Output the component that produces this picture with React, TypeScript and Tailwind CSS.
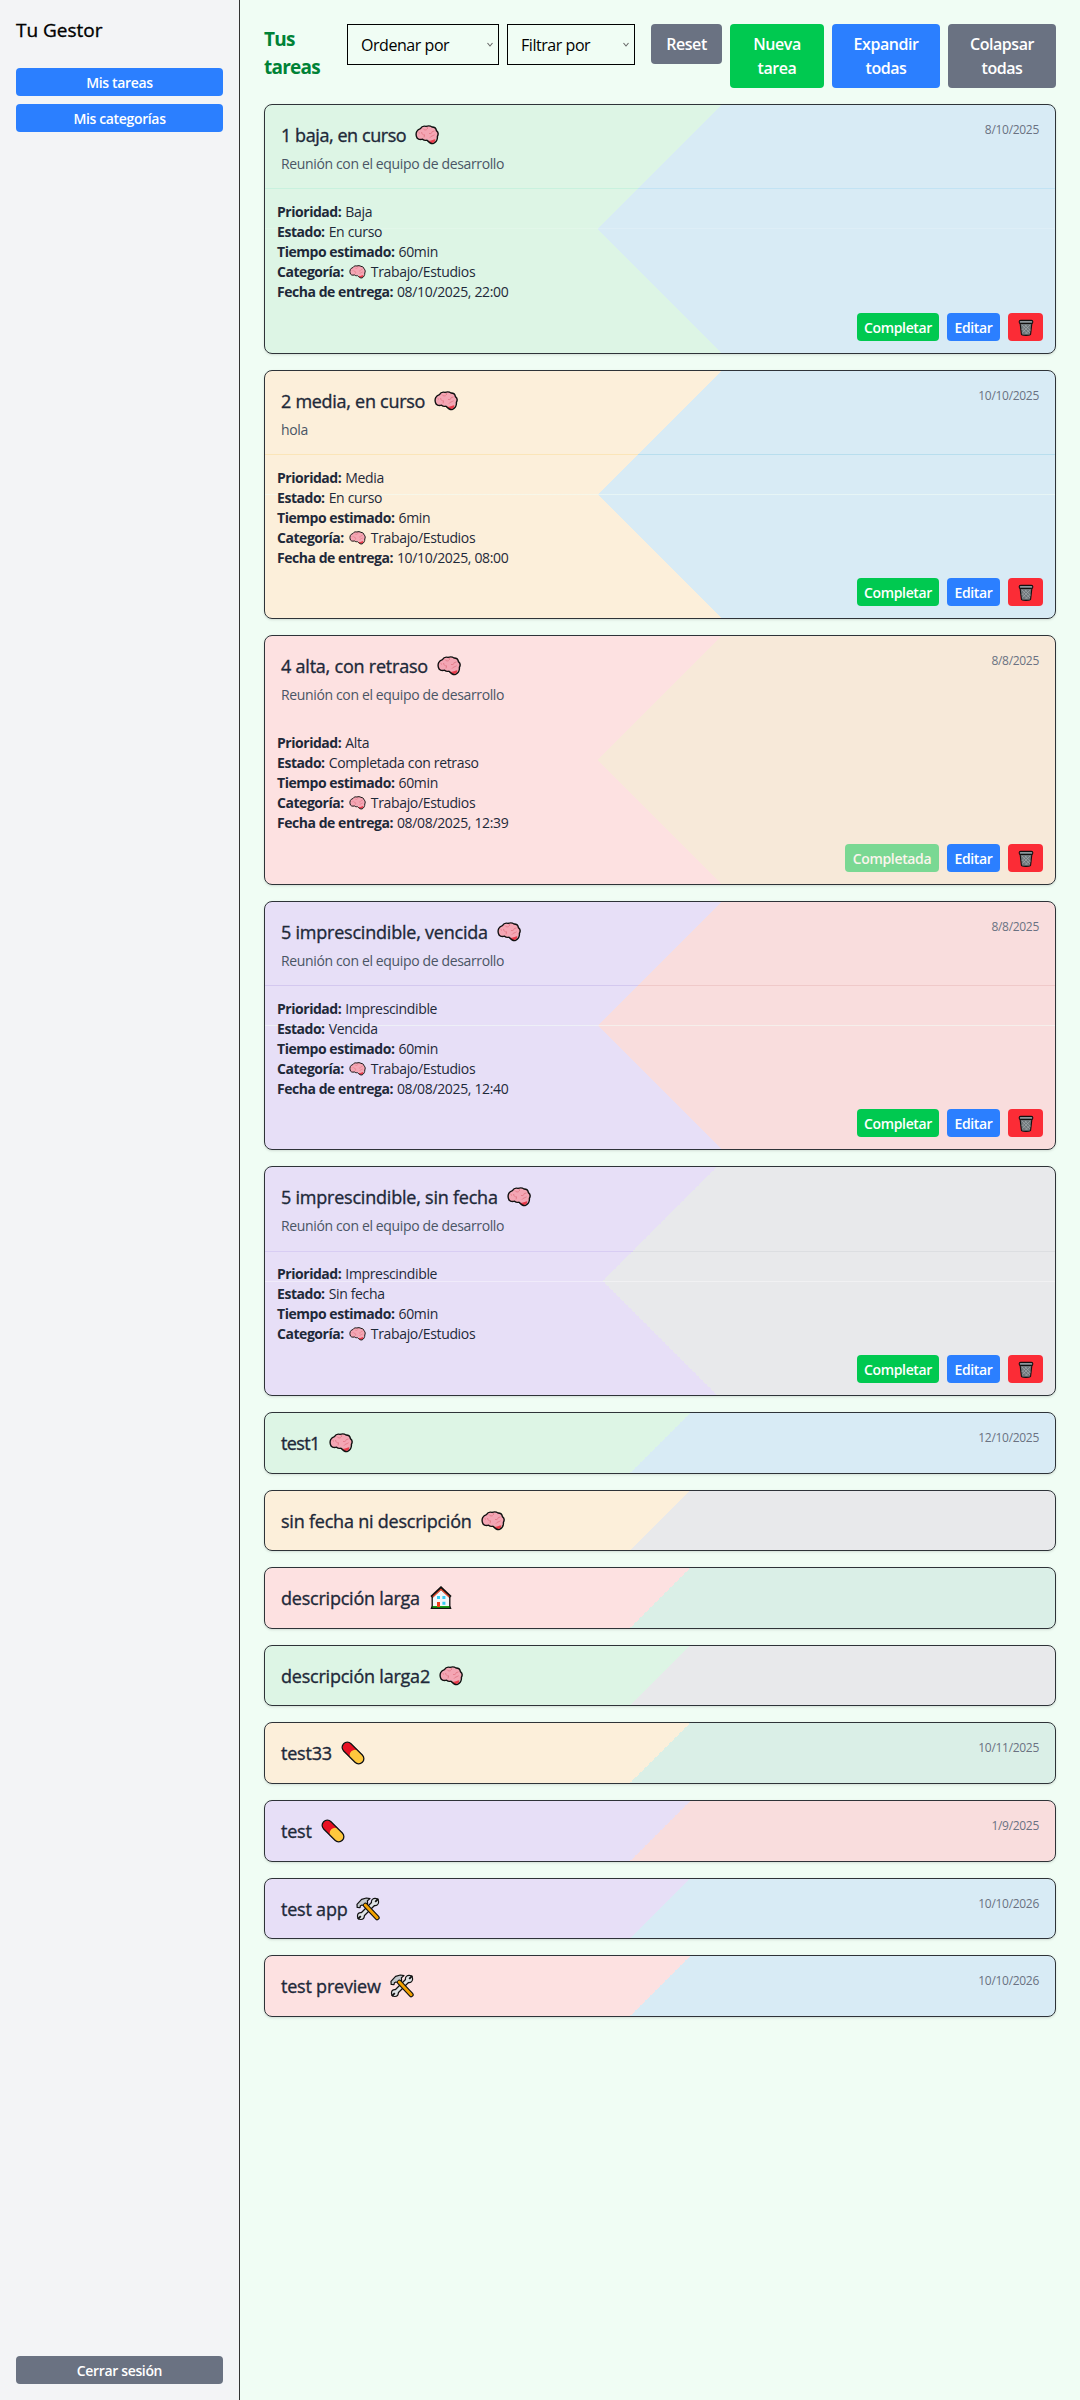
import React from "react";

type IconName = "brain" | "house" | "pill" | "tools";

function Brain({ className }: { className: string }) {
  return (
    <svg viewBox="0 0 24 20" className={className}>
      <path d="M14.5 15.5 20.6 13.6 C20.8 16.8 18.6 18.6 16.4 18.2 C14.4 17.8 13.6 16.6 12 15.4Z" fill="#e83b4b" />
      <path
        d="M5.4 3.6 C6.6 1.6 9 .8 11 1.4 C13 .7 15.4 .8 17 2 C19.4 2 21.2 3.6 21.4 5.6 C23.2 7 23.6 9.4 22.6 11 C22.6 13.4 20.6 14.8 18.4 14.6 C16.6 16 14 15.8 12.4 14.4 C10.4 15.4 8.6 15.2 7.6 14.2 C4.6 15.2 1.8 14 1.4 11.4 C.4 8 2 4.4 5.4 3.6Z"
        fill="#f4a6b4"
      />
      <path
        d="M8 3.6 C9 5 10.4 5.2 11.8 4.6 M12 1.8 12.6 4 M6.6 7 C6.6 9 8 10.2 9.8 9.8 M9 12.4 9.6 10 M14 8.4 C15.4 9 17 8.4 17.2 6.6 M17.2 6.6 19.4 6 M15 12.6 C15.8 11 17.8 11 19.6 9.8 M3.6 7.4 5 8.4"
        fill="none"
        stroke="#e5808d"
        strokeWidth="1"
      />
      <path
        d="M5.4 3.6 C6.6 1.6 9 .8 11 1.4 C13 .7 15.4 .8 17 2 C19.4 2 21.2 3.6 21.4 5.6 C23.2 7 23.4 9.6 22.4 11.4 C22.6 14 21.4 17 18.6 18.4 C16.2 19.2 13.6 17 12 15.2 C10.4 15.6 8.6 15.2 7.6 14.2 C4.6 15.2 1.8 14 1.4 11.4 C.4 8 2 4.4 5.4 3.6Z"
        fill="none"
        stroke="#111"
        strokeWidth="1.4"
        strokeLinejoin="round"
      />
    </svg>
  );
}

function Icon({ name }: { name: IconName }) {
  if (name === "brain") return <Brain className="h-5 w-6" />;
  if (name === "house")
    return (
      <svg viewBox="0 0 24 24" className="size-6">
        <path d="M3.4 10 12 2.4 20.6 10 V21 H3.4Z" fill="#f4f6f8" />
        <path d="M3 20 H21 V22 H3Z" fill="#16a016" />
        <path d="M2.4 11 12 2 21.6 11" fill="none" stroke="#111" strokeWidth="3" />
        <path d="M3.4 11.2 12 3.2 20.6 11.2" fill="none" stroke="#e8482c" strokeWidth="1.2" />
        <path d="M3.2 10.5 V20 L2.4 22.4 H21.6 L20.8 20 V10.5" fill="none" stroke="#111" strokeWidth="1.3" />
        <path d="M8 16 H11 V21 H8Z" fill="#f03a17" />
        <path d="M8 10 H11 V13 H8Z M13.4 10 H16.4 V13 H13.4Z M13.4 15.8 H16.4 V18.8 H13.4Z" fill="#35cdf5" />
      </svg>
    );
  if (name === "pill")
    return (
      <svg viewBox="0 0 24 24" className="size-6">
        <g transform="rotate(45 12 12)">
          <path d="M12 7 H4.2 A5 5 0 0 0 4.2 17 H12Z" fill="#e81123" />
          <path d="M13 7 H19.8 A5 5 0 0 1 19.8 17 H13 A5.4 5.4 0 0 1 13 7Z" fill="#ffc83d" />
          <rect x="-1.2" y="6.8" width="26.4" height="10.4" rx="5.2" fill="none" stroke="#111" strokeWidth="1.3" />
        </g>
      </svg>
    );
  return (
    <svg viewBox="0 0 24 24" className="size-6">
      <path d="M5 19 L19 5" stroke="#111" strokeWidth="5.4" />
      <circle cx="4.9" cy="19.1" r="4" fill="#111" />
      <circle cx="19" cy="5" r="4.2" fill="#111" />
      <path d="M5 19 L19 5" stroke="#dfe3e6" strokeWidth="3" />
      <circle cx="4.9" cy="19.1" r="2.8" fill="#dfe3e6" />
      <circle cx="19" cy="5" r="3" fill="#dfe3e6" />
      <path d="M1.8 22.2 L4.8 19.2 M19.2 4.8 L22.4 1.6" stroke="#111" strokeWidth="1.8" />
      <path
        d="M1.2 10.4 L1 7.4 L5.6 2.4 L10.4 1 L14 1.6 L11.4 3.8 L11.6 6.6 L9 9 L6 8 L4.4 8.8 L4 10.6Z"
        fill="#c3c8cc"
        stroke="#111"
        strokeWidth="1.2"
        strokeLinejoin="round"
      />
      <path d="M9.4 8.2 L21.2 20.8" stroke="#111" strokeWidth="5" strokeLinecap="round" />
      <path d="M9.2 8 L21.2 20.8" stroke="#f2a100" strokeWidth="2.8" strokeLinecap="round" />
    </svg>
  );
}

function Trash() {
  return (
    <svg viewBox="0 0 16 18" className="mt-0.5 h-[18px] w-4">
      <path d="M2 3.4 L3.4 15.2 C3.6 16.8 12.4 16.8 12.6 15.2 L14 3.4Z" fill="#6f777b" stroke="#111" strokeWidth="1.1" />
      <path
        d="M4 6 12 14 M4.6 10 9.5 15 M7 6 12.6 11.4 M12 6 4.4 13.6 M12 10.4 7.4 15 M8.6 6 3.8 10.8"
        stroke="#a9b1b5"
        strokeWidth=".6"
      />
      <rect x="1.2" y="1.4" width="13.6" height="3" rx="1.4" fill="#8d979c" stroke="#111" strokeWidth="1.1" />
    </svg>
  );
}

type Task = {
  title: string;
  tracking?: string;
  icon: IconName;
  date?: string;
  bg: string;
  desc?: string;
  fields?: [string, string][];
  done?: boolean;
  size: string;
};

const tasks: Task[] = [
  {
    title: "1 baja, en curso",
    tracking: "tracking-[-0.43px]",
    icon: "brain",
    date: "8/10/2025",
    desc: "Reunión con el equipo de desarrollo",
    size: "h-[249.6px]",
    bg: "[background:linear-gradient(90deg,#c8f1de_0_373px,#c2e3f4_373px)_0_83px/100%_1px_no-repeat,linear-gradient(#ffffff28,#ffffff28)_0_123px/100%_1px_no-repeat,linear-gradient(135deg,#ddf5e5_50%,#d8ebf5_50%)_top/100%_50%_no-repeat,linear-gradient(45deg,#ddf5e5_50%,#d8ebf5_50%)_bottom/100%_50%_no-repeat]",
    fields: [["Prioridad", "Baja"], ["Estado", "En curso"], ["Tiempo estimado", "60min"], ["Categoría", "Trabajo/Estudios"], ["Fecha de entrega", "08/10/2025, 22:00"]],
  },
  {
    title: "2 media, en curso",
    tracking: "tracking-[-0.28px]",
    icon: "brain",
    date: "10/10/2025",
    desc: "hola",
    size: "h-[249.6px]",
    bg: "[background:linear-gradient(90deg,#fbe5b8_0_373px,#b8deee_373px)_0_83px/100%_1px_no-repeat,linear-gradient(#ffffff18,#ffffff18)_0_123px/100%_1px_no-repeat,linear-gradient(135deg,#fcefda_50%,#d8ebf5_50%)_top/100%_50%_no-repeat,linear-gradient(45deg,#fcefda_50%,#d8ebf5_50%)_bottom/100%_50%_no-repeat]",
    fields: [["Prioridad", "Media"], ["Estado", "En curso"], ["Tiempo estimado", "6min"], ["Categoría", "Trabajo/Estudios"], ["Fecha de entrega", "10/10/2025, 08:00"]],
  },
  {
    title: "4 alta, con retraso",
    icon: "brain",
    date: "8/8/2025",
    desc: "Reunión con el equipo de desarrollo",
    size: "h-[249.6px]",
    done: true,
    bg: "[background:linear-gradient(135deg,#fde1e1_50%,#f7e9d9_50%)_top/100%_50%_no-repeat,linear-gradient(45deg,#fde1e1_50%,#f7e9d9_50%)_bottom/100%_50%_no-repeat]",
    fields: [["Prioridad", "Alta"], ["Estado", "Completada con retraso"], ["Tiempo estimado", "60min"], ["Categoría", "Trabajo/Estudios"], ["Fecha de entrega", "08/08/2025, 12:39"]],
  },
  {
    title: "5 imprescindible, vencida",
    icon: "brain",
    date: "8/8/2025",
    desc: "Reunión con el equipo de desarrollo",
    size: "h-[249.6px]",
    bg: "[background:linear-gradient(90deg,#d4c8ef_0_373px,#f0c9c9_373px)_0_83px/100%_1px_no-repeat,linear-gradient(#ffffff20,#ffffff20)_0_123px/100%_1px_no-repeat,linear-gradient(135deg,#e7dff7_50%,#f9dddd_50%)_top/100%_50%_no-repeat,linear-gradient(45deg,#e7dff7_50%,#f9dddd_50%)_bottom/100%_50%_no-repeat]",
    fields: [["Prioridad", "Imprescindible"], ["Estado", "Vencida"], ["Tiempo estimado", "60min"], ["Categoría", "Trabajo/Estudios"], ["Fecha de entrega", "08/08/2025, 12:40"]],
  },
  {
    title: "5 imprescindible, sin fecha",
    icon: "brain",
    desc: "Reunión con el equipo de desarrollo",
    size: "h-[229.6px]",
    bg: "[background:linear-gradient(90deg,#d8cdf3_0_368px,#dcdee1_368px)_0_84px/100%_1px_no-repeat,linear-gradient(#ffffff60,#ffffff60)_0_114px/100%_1px_no-repeat,linear-gradient(135deg,#e7dff7_50%,#e8e9eb_50%)_top/100%_50%_no-repeat,linear-gradient(45deg,#e7dff7_50%,#e8e9eb_50%)_bottom/100%_50%_no-repeat]",
    fields: [["Prioridad", "Imprescindible"], ["Estado", "Sin fecha"], ["Tiempo estimado", "60min"], ["Categoría", "Trabajo/Estudios"]],
  },
  { title: "test1", tracking: "tracking-[-0.6px]", icon: "brain", date: "12/10/2025", size: "h-[61.6px]", bg: "bg-[linear-gradient(135deg,#ddf5e5_50%,#d8ebf5_50%)]" },
  { title: "sin fecha ni descripción", icon: "brain", size: "h-[61.6px]", bg: "bg-[linear-gradient(135deg,#fcefda_50%,#e8e9eb_50%)]" },
  { title: "descripción larga", icon: "house", size: "h-[61.6px]", bg: "bg-[linear-gradient(135deg,#fde1e1_50%,#daefe7_50%)]" },
  { title: "descripción larga2", icon: "brain", size: "h-[61.6px]", bg: "bg-[linear-gradient(135deg,#ddf5e5_50%,#e8e9eb_50%)]" },
  { title: "test33", icon: "pill", date: "10/11/2025", size: "h-[61.6px]", bg: "bg-[linear-gradient(135deg,#fcefda_50%,#daefe7_50%)]" },
  { title: "test", icon: "pill", date: "1/9/2025", size: "h-[61.6px]", bg: "bg-[linear-gradient(135deg,#e7dff7_50%,#f9dddd_50%)]" },
  { title: "test app", icon: "tools", date: "10/10/2026", size: "h-[61.6px]", bg: "bg-[linear-gradient(135deg,#e7dff7_50%,#d8ebf5_50%)]" },
  { title: "test preview", icon: "tools", date: "10/10/2026", size: "h-[61.6px]", bg: "bg-[linear-gradient(135deg,#fde1e1_50%,#d8ebf5_50%)]" },
];

function TaskCard({ task }: { task: Task }) {
  return (
    <article className={`flex shrink-0 flex-col overflow-hidden rounded-lg border border-[#2e3338] shadow-sm ${task.size} ${task.bg}`}>
      <header className="flex items-start justify-between p-4 pb-0">
        <div>
          <div className="flex h-7 items-center gap-[9px]">
            <h3
              className={`text-lg leading-7 font-medium whitespace-nowrap text-gray-800 [-webkit-text-stroke:0.35px] ${task.tracking ?? "tracking-[-0.22px]"}`}
            >
              {task.title}
            </h3>
            <Icon name={task.icon} />
          </div>
          {task.desc && <p className="mt-[5px] text-sm tracking-[-0.36px] text-gray-600">{task.desc}</p>}
        </div>
        {task.date && <time className="pt-px text-xs tracking-[-0.3px] text-gray-500">{task.date}</time>}
      </header>
      {task.fields && (
        <>
          <dl className="mt-7 px-3 text-sm tracking-[-0.34px] text-gray-800">
            {task.fields.map(([k, v]) => (
              <div key={k} className="flex h-5 items-center gap-1 whitespace-nowrap">
                <dt className="font-bold tracking-[-0.46px]">{k}:</dt>
                {k === "Categoría" && <Brain className="mx-px h-[14px] w-[17px]" />}
                <dd>{v}</dd>
              </div>
            ))}
          </dl>
          <footer className="mt-auto flex justify-end gap-2 px-3 pb-3 text-sm font-semibold tracking-[-0.35px] text-white">
            {task.done ? (
              <button className="h-7 w-[94px] rounded bg-[#00c950] pt-0.5 opacity-50">Completada</button>
            ) : (
              <button className="h-7 w-[82px] rounded bg-[#00c950] pt-0.5">Completar</button>
            )}
            <button className="h-7 w-[53px] rounded bg-[#2b7fff] pt-0.5">Editar</button>
            <button className="flex h-7 w-[35px] items-center justify-center rounded bg-[#fb2c36]">
              <Trash />
            </button>
          </footer>
        </>
      )}
    </article>
  );
}

function Select({ label, className }: { label: string; className: string }) {
  return (
    <div className={`flex h-[41px] items-center justify-between border border-black pr-1 pl-[13px] text-base tracking-[-0.45px] ${className}`}>
      <span>{label}</span>
      <svg viewBox="0 0 8 6" className="h-1.5 w-2">
        <path d="M1.5 1 4 4 6.5 1" fill="none" stroke="#666" strokeWidth="1.1" />
      </svg>
    </div>
  );
}

export default function App() {
  return (
    <div className="flex h-[2400px] w-[1080px] bg-[#f0fdf4] font-['Open_Sans','Noto_Sans',sans-serif]">
      <aside className="flex w-60 shrink-0 flex-col border-r border-[#333] bg-gray-100 p-4">
        <h1 className="mb-6 text-[19px] leading-7 font-medium text-black [-webkit-text-stroke:0.35px]">Tu Gestor</h1>
        <nav className="flex flex-col gap-2 text-sm font-semibold tracking-[-0.35px] text-white">
          <button className="h-7 rounded bg-[#2b7fff] pt-0.5">Mis tareas</button>
          <button className="h-7 rounded bg-[#2b7fff] pt-0.5">Mis categorías</button>
        </nav>
        <button className="mt-auto h-7 rounded bg-[#6a7282] pt-0.5 text-sm font-semibold tracking-[-0.35px] text-white">Cerrar sesión</button>
      </aside>
      <main className="flex grow flex-col gap-4 p-6">
        <div className="flex h-16 shrink-0 items-start">
          <h2 className="w-[83px] pt-px text-[19px] leading-7 font-bold tracking-[-0.75px] text-[#008236]">Tus tareas</h2>
          <Select label="Ordenar por" className="w-[152px]" />
          <Select label="Filtrar por" className="ml-2 w-[128px]" />
          <div className="ml-auto flex items-start gap-2 text-base leading-6 font-semibold tracking-[-0.45px] text-white">
            <button className="h-10 w-[71px] rounded bg-[#6a7282]">Reset</button>
            <button className="h-16 w-[94px] rounded bg-[#00c950] px-4">Nueva tarea</button>
            <button className="h-16 w-[108px] rounded bg-[#2b7fff] px-4">Expandir todas</button>
            <button className="h-16 w-[108px] rounded bg-[#6a7282] px-4">Colapsar todas</button>
          </div>
        </div>
        {tasks.map((t) => (
          <TaskCard key={t.title} task={t} />
        ))}
      </main>
    </div>
  );
}
